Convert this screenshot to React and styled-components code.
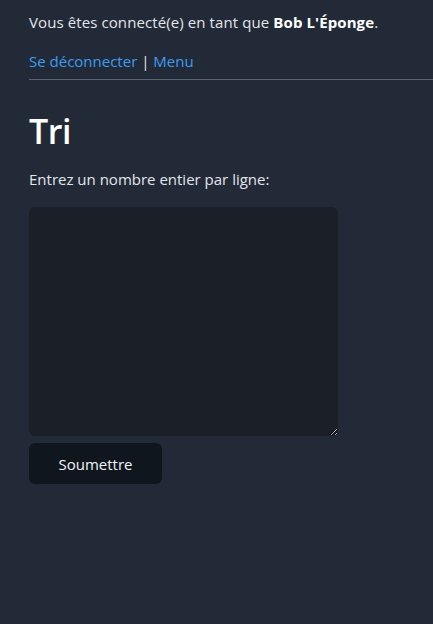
import React from 'react';
import styled, { createGlobalStyle } from 'styled-components';

const GlobalStyle = createGlobalStyle`
  html, body {
    margin: 0;
    padding: 0;
    background: #222a37;
    min-height: 100%;
  }
  body {
    font-family: "Open Sans", "Noto Sans", sans-serif;
    color: #e6e9ee;
  }
`;

const Page = styled.div`
  min-height: 624px;
  padding: 11px 0 0 29px;
  box-sizing: border-box;
`;

const Status = styled.p`
  margin: 0;
  font-size: 15px;
  line-height: 22px;
  color: #e2e6eb;
  letter-spacing: 0.1px;

  strong {
    color: #ffffff;
    font-weight: 700;
  }
`;

const NavLinks = styled.nav`
  margin-top: 17px;
  font-size: 15px;
  line-height: 22px;
  color: #e2e6eb;
  padding-bottom: 7px;
  border-bottom: 1px solid #5a6577;
`;

const Link = styled.a`
  color: #3d9cf0;
  text-decoration: none;
`;

const Title = styled.h1`
  margin: 28px 0 0;
  font-size: 34px;
  line-height: 46px;
  font-weight: 600;
  letter-spacing: -0.5px;
  color: #ffffff;
`;

const Label = styled.label`
  display: block;
  margin-top: 14px;
  font-size: 15px;
  line-height: 22px;
  color: #e2e6eb;
`;

const Area = styled.textarea`
  display: block;
  margin-top: 17px;
  width: 309px;
  height: 229px;
  box-sizing: border-box;
  background: #1a1f28;
  border: none;
  border-radius: 6px;
  color: #e2e6eb;
  font-family: inherit;
  font-size: 15px;
  padding: 8px;
  outline: none;
`;

const SubmitButton = styled.button`
  display: block;
  margin-top: 7px;
  width: 133px;
  height: 41px;
  background: #0f161e;
  border: none;
  border-radius: 6px;
  color: #f2f4f7;
  font-family: inherit;
  font-size: 15px;
  cursor: pointer;
`;

export default function App() {
  return (
    <>
      <GlobalStyle />
      <Page>
        <Status>
          Vous êtes connecté(e) en tant que <strong>Bob L'Éponge</strong>.
        </Status>
        <NavLinks>
          <Link href="#">Se déconnecter</Link> | <Link href="#">Menu</Link>
        </NavLinks>
        <Title>Tri</Title>
        <Label htmlFor="nombres">Entrez un nombre entier par ligne:</Label>
        <Area id="nombres" />
        <SubmitButton type="button">Soumettre</SubmitButton>
      </Page>
    </>
  );
}
